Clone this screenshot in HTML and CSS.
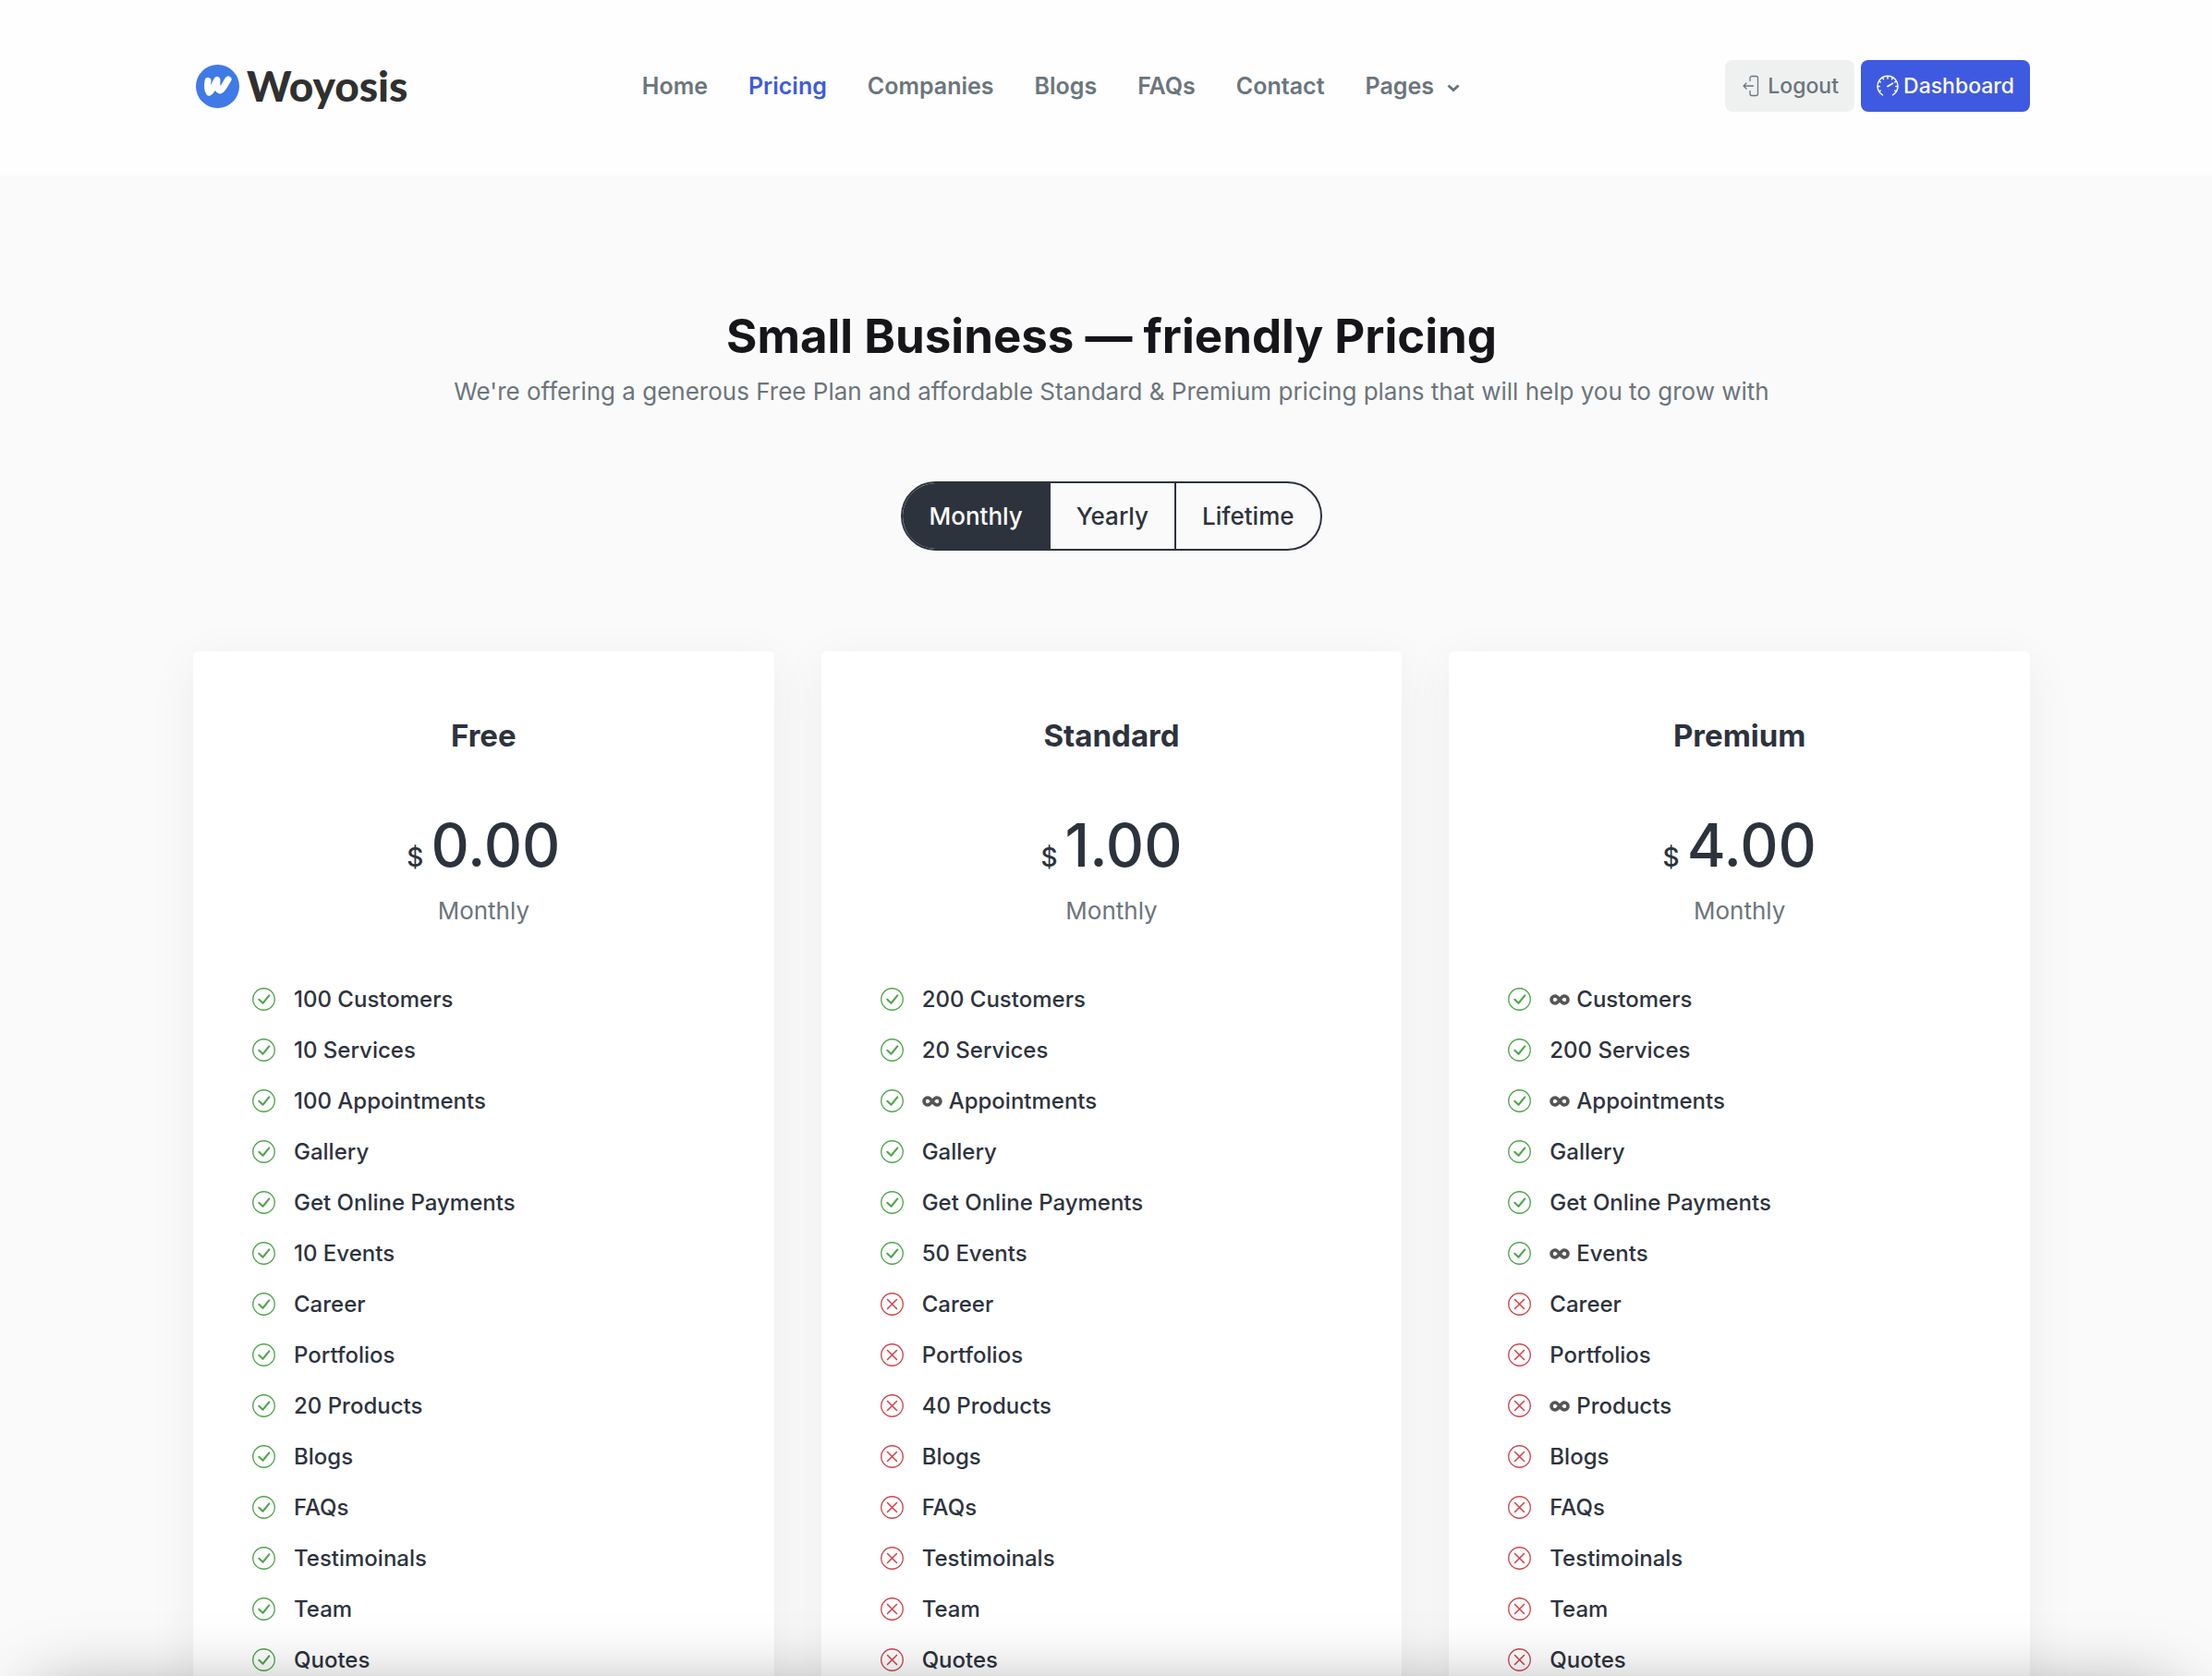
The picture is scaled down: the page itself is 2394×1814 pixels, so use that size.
FILE: index.html
```html
<!DOCTYPE html>
<html lang="en">
<head>
    <meta charset="UTF-8">
    <meta name="viewport" content="width=device-width, initial-scale=1.0">
    <title>Woyosis - Pricing</title>
    <link rel="stylesheet" href="styles.css">
</head>
<body>

    <!-- Icon sprite -->
    <svg class="sprite" xmlns="http://www.w3.org/2000/svg">
        <symbol id="icon-check" viewBox="0 0 24 24">
            <circle cx="12" cy="12" r="11.3" fill="none" stroke="currentColor" stroke-width="1.3"></circle>
            <path d="M7 12.300l4 3.800 6.600-8" fill="none" stroke="currentColor" stroke-width="2" stroke-linecap="round" stroke-linejoin="round"></path>
        </symbol>
        <symbol id="icon-cross" viewBox="0 0 24 24">
            <circle cx="12" cy="12" r="11.3" fill="none" stroke="currentColor" stroke-width="1.3"></circle>
            <path d="M7.200 7.200l9.600 9.600M16.800 7.200l-9.600 9.600" fill="none" stroke="currentColor" stroke-width="1.500" stroke-linecap="round"></path>
        </symbol>
        <symbol id="icon-infinity" viewBox="0 0 22 12">
            <path d="M11 6C9.300 3.500 7.900 2 6 2a4 4 0 0 0 0 8c1.900 0 3.300-1.500 5-4s3.100-4 5-4a4 4 0 0 1 0 8c-1.900 0-3.300-1.500-5-4z" fill="none" stroke="currentColor" stroke-width="3.600"></path>
        </symbol>
    </svg>

    <header class="header">
        <div class="container header-inner">
            <a href="#" class="logo">
                <svg class="logo-mark" viewBox="0 0 47 47">
                    <circle cx="23.500" cy="23.500" r="23.500" fill="#3f7ae6"></circle>
                    <path d="M13 17.500c-.8 5-1 9.500 1.300 12.700 3.700-1.500 5-8 8.700-13.700-.5 5-.8 9.500 3 11.500 4-1.500 5.500-7.500 9-12" fill="none" stroke="#fff" stroke-width="7" stroke-linecap="round" stroke-linejoin="round"></path>
                </svg>
                <span class="logo-text">Woyosis</span>
            </a>

            <nav class="nav">
                <a href="#">Home</a>
                <a href="#" class="active">Pricing</a>
                <a href="#">Companies</a>
                <a href="#">Blogs</a>
                <a href="#">FAQs</a>
                <a href="#">Contact</a>
                <a href="#" class="nav-more">Pages
                    <svg class="chevron" viewBox="0 0 14 10"><path d="M1.500 2.500l5.500 5 5.500-5" fill="none" stroke="currentColor" stroke-width="3"></path></svg>
                </a>
            </nav>

            <div class="header-actions">
                <button type="button" class="btn btn-light">
                    <svg class="btn-icon" viewBox="0 0 24 24" fill="none" stroke="currentColor" stroke-width="1.300" stroke-linecap="round" stroke-linejoin="round">
                        <path d="M10 6.500V3.500a2 2 0 0 1 2-2h4.500a2 2 0 0 1 2 2v17a2 2 0 0 1-2 2H12a2 2 0 0 1-2-2v-3M13.500 12H3M6 9l-3 3 3 3"></path>
                    </svg>
                    Logout
                </button>
                <button type="button" class="btn btn-primary">
                    <svg class="btn-icon" viewBox="0 0 24 24" fill="none" stroke="currentColor" stroke-width="1.500" stroke-linecap="round">
                        <path d="M6.500 21.800a11 11 0 1 1 11 0"></path>
                        <path d="M12 12.500l5.500-3.200" stroke-width="1.800"></path>
                        <path d="M12 1.500v2.500M6.500 3l.9 1.600M17.500 3l-.9 1.600M2.700 7l1.500.9M21.300 7l-1.500.9M1.500 12.500h1.700M22.500 12.500h-1.700M2.900 17.800l1.300-.7M21.100 17.800l-1.300-.7"></path>
                    </svg>
                    Dashboard
                </button>
            </div>
        </div>
    </header>

    <main class="container pricing">
        <h1 class="title">Small Business — friendly Pricing</h1>
        <p class="subtitle">We're offering a generous Free Plan and affordable Standard &amp; Premium pricing plans that will help you to grow with</p>

        <div class="period">
            <button type="button" class="period-btn selected">Monthly</button>
            <button type="button" class="period-btn">Yearly</button>
            <button type="button" class="period-btn">Lifetime</button>
        </div>

        <div class="plans">
            <section class="plan">
                <h2 class="plan-name">Free</h2>
                <div class="price"><span class="currency">$</span><span class="amount">0.00</span></div>
                <p class="term">Monthly</p>
                <ul class="features">
                    <li><svg class="yes"><use href="#icon-check"></use></svg>100 Customers</li>
                    <li><svg class="yes"><use href="#icon-check"></use></svg>10 Services</li>
                    <li><svg class="yes"><use href="#icon-check"></use></svg>100 Appointments</li>
                    <li><svg class="yes"><use href="#icon-check"></use></svg>Gallery</li>
                    <li><svg class="yes"><use href="#icon-check"></use></svg>Get Online Payments</li>
                    <li><svg class="yes"><use href="#icon-check"></use></svg>10 Events</li>
                    <li><svg class="yes"><use href="#icon-check"></use></svg>Career</li>
                    <li><svg class="yes"><use href="#icon-check"></use></svg>Portfolios</li>
                    <li><svg class="yes"><use href="#icon-check"></use></svg>20 Products</li>
                    <li><svg class="yes"><use href="#icon-check"></use></svg>Blogs</li>
                    <li><svg class="yes"><use href="#icon-check"></use></svg>FAQs</li>
                    <li><svg class="yes"><use href="#icon-check"></use></svg>Testimoinals</li>
                    <li><svg class="yes"><use href="#icon-check"></use></svg>Team</li>
                    <li><svg class="yes"><use href="#icon-check"></use></svg>Quotes</li>
                </ul>
            </section>

            <section class="plan">
                <h2 class="plan-name">Standard</h2>
                <div class="price"><span class="currency">$</span><span class="amount">1.00</span></div>
                <p class="term">Monthly</p>
                <ul class="features">
                    <li><svg class="yes"><use href="#icon-check"></use></svg>200 Customers</li>
                    <li><svg class="yes"><use href="#icon-check"></use></svg>20 Services</li>
                    <li><svg class="yes"><use href="#icon-check"></use></svg><svg class="infinity"><use href="#icon-infinity"></use></svg>Appointments</li>
                    <li><svg class="yes"><use href="#icon-check"></use></svg>Gallery</li>
                    <li><svg class="yes"><use href="#icon-check"></use></svg>Get Online Payments</li>
                    <li><svg class="yes"><use href="#icon-check"></use></svg>50 Events</li>
                    <li><svg class="no"><use href="#icon-cross"></use></svg>Career</li>
                    <li><svg class="no"><use href="#icon-cross"></use></svg>Portfolios</li>
                    <li><svg class="no"><use href="#icon-cross"></use></svg>40 Products</li>
                    <li><svg class="no"><use href="#icon-cross"></use></svg>Blogs</li>
                    <li><svg class="no"><use href="#icon-cross"></use></svg>FAQs</li>
                    <li><svg class="no"><use href="#icon-cross"></use></svg>Testimoinals</li>
                    <li><svg class="no"><use href="#icon-cross"></use></svg>Team</li>
                    <li><svg class="no"><use href="#icon-cross"></use></svg>Quotes</li>
                </ul>
            </section>

            <section class="plan">
                <h2 class="plan-name">Premium</h2>
                <div class="price"><span class="currency">$</span><span class="amount">4.00</span></div>
                <p class="term">Monthly</p>
                <ul class="features">
                    <li><svg class="yes"><use href="#icon-check"></use></svg><svg class="infinity"><use href="#icon-infinity"></use></svg>Customers</li>
                    <li><svg class="yes"><use href="#icon-check"></use></svg>200 Services</li>
                    <li><svg class="yes"><use href="#icon-check"></use></svg><svg class="infinity"><use href="#icon-infinity"></use></svg>Appointments</li>
                    <li><svg class="yes"><use href="#icon-check"></use></svg>Gallery</li>
                    <li><svg class="yes"><use href="#icon-check"></use></svg>Get Online Payments</li>
                    <li><svg class="yes"><use href="#icon-check"></use></svg><svg class="infinity"><use href="#icon-infinity"></use></svg>Events</li>
                    <li><svg class="no"><use href="#icon-cross"></use></svg>Career</li>
                    <li><svg class="no"><use href="#icon-cross"></use></svg>Portfolios</li>
                    <li><svg class="no"><use href="#icon-cross"></use></svg><svg class="infinity"><use href="#icon-infinity"></use></svg>Products</li>
                    <li><svg class="no"><use href="#icon-cross"></use></svg>Blogs</li>
                    <li><svg class="no"><use href="#icon-cross"></use></svg>FAQs</li>
                    <li><svg class="no"><use href="#icon-cross"></use></svg>Testimoinals</li>
                    <li><svg class="no"><use href="#icon-cross"></use></svg>Team</li>
                    <li><svg class="no"><use href="#icon-cross"></use></svg>Quotes</li>
                </ul>
            </section>
        </div>
    </main>

    <div class="bottom-shade"></div>

</body>
</html>
```

FILE: styles.css
```css
* {
    box-sizing: border-box;
}

body {
    margin: 0;
    height: 100vh;
    overflow: hidden;
    font-family: Inter, "Liberation Sans", sans-serif;
    font-size: 24px;
    background-color: #fafafa;
    color: #2d333d;
}

h1, h2, p, ul {
    margin: 0;
    padding: 0;
}

a {
    text-decoration: none;
    color: inherit;
}

button {
    font: inherit;
    cursor: pointer;
}

.sprite {
    display: none;
}

.container {
    max-width: 2000px;
    margin: 0 auto;
    padding-left: 12px;
}

/* Header */
.header {
    background-color: #fefefe;
    padding: 65px 0 69px;
}

.header-inner {
    display: flex;
    justify-content: space-between;
    align-items: center;
}

.logo {
    display: flex;
    align-items: center;
    gap: 8px;
    padding-left: 3px;
}

.logo-mark {
    width: 47px;
    height: 47px;
}

.logo-text {
    font-family: Lato, sans-serif;
    font-size: 46px;
    line-height: 48px;
    font-weight: 900;
    color: #303030;
}

.nav {
    display: flex;
    gap: 44px;
    padding-right: 34px;
    font-size: 25px;
    font-weight: 600;
    color: #6b757c;
}

.nav .active {
    color: #3e5ae0;
}

.nav-more {
    display: flex;
    align-items: center;
    gap: 14px;
}

.chevron {
    width: 14px;
    height: 10px;
    margin-top: 4px;
}

.header-actions {
    display: flex;
    gap: 7px;
}

.btn {
    display: flex;
    align-items: center;
    gap: 5px;
    height: 56px;
    padding: 0 17px;
    border: none;
    border-radius: 8px;
    font-size: 23px;
    font-weight: 500;
}

.btn-light {
    background-color: #eff1f1;
    color: #6b757c;
}

.btn-primary {
    background-color: #3e5ae0;
    color: #fff;
}

.btn-icon {
    width: 24px;
    height: 24px;
}

/* Pricing */
.pricing {
    padding-top: 140px;
    text-align: center;
}

.title {
    font-size: 51px;
    line-height: 68px;
    font-weight: 700;
    color: #16161a;
}

.subtitle {
    margin-top: 8px;
    font-size: 26px;
    line-height: 36px;
    color: #6b757c;
}

.period {
    display: inline-flex;
    height: 75px;
    margin-top: 79px;
    border: 2px solid #2d333d;
    border-radius: 38px;
    background-clip: padding-box;
    overflow: hidden;
}

.period-btn {
    padding: 0 28px;
    border: none;
    background: none;
    color: #2d333d;
    font-size: 26px;
    font-weight: 500;
}

.period-btn + .period-btn {
    border-left: 2px solid #2d333d;
}

.period-btn.selected {
    background-color: #2d333d;
    color: #fff;
}

.plans {
    display: grid;
    grid-template-columns: repeat(3, 1fr);
    gap: 51px;
    margin-top: 109px;
}

.plan {
    padding: 70px 64px;
    background-color: #fff;
    border-radius: 6px;
    box-shadow: 0 12px 54px rgba(30, 40, 50, 0.06);
}

.plan-name {
    font-size: 33px;
    line-height: 42px;
    font-weight: 700;
}

.price {
    display: flex;
    justify-content: center;
    align-items: baseline;
    gap: 8px;
    margin-top: 58px;
    line-height: 80px;
}

.currency {
    font-size: 28px;
    font-weight: 500;
}

.amount {
    font-size: 64px;
    font-weight: 500;
}

.term {
    font-size: 26px;
    line-height: 36px;
    color: #6b757c;
}

.features {
    margin-top: 50px;
    list-style: none;
}

.features li {
    display: flex;
    align-items: center;
    height: 55px;
    font-weight: 500;
}

.yes,
.no {
    width: 25px;
    height: 25px;
    margin-right: 20px;
}

.yes {
    color: #4fa64b;
}

.no {
    color: #d0454c;
}

.infinity {
    width: 22px;
    height: 12px;
    margin-right: 7px;
    color: #555;
}

/* Soft shade along the bottom edge of the window */
.bottom-shade {
    position: fixed;
    top: 100%;
    left: 40px;
    right: 40px;
    height: 100px;
    box-shadow: 0 20px 80px rgba(0, 0, 0, 0.4);
    pointer-events: none;
}
```
